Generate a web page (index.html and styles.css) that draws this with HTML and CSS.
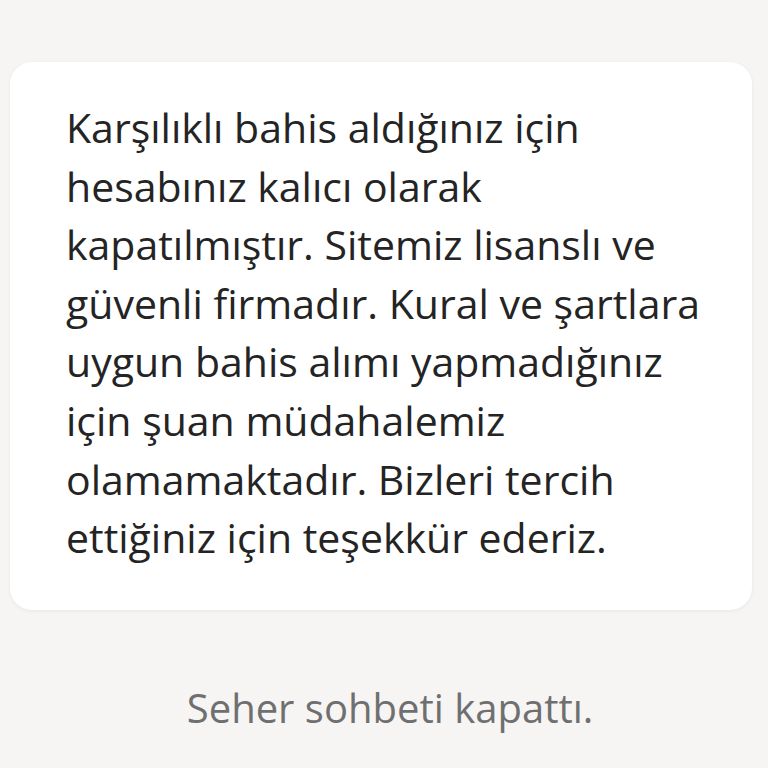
FILE: index.html
```html
<!DOCTYPE html>
<html lang="tr">
<head>
    <meta charset="UTF-8">
    <meta name="viewport" content="width=device-width, initial-scale=1.0">
    <title>Sohbet</title>
    <link rel="stylesheet" href="styles.css">
</head>
<body>
    <div class="chat">
        <!-- Agent message bubble -->
        <div class="message">
            <p>Karşılıklı bahis aldığınız için<br>
            hesabınız kalıcı olarak<br>
            kapatılmıştır. Sitemiz lisanslı ve<br>
            güvenli firmadır. Kural ve şartlara<br>
            uygun bahis alımı yapmadığınız<br>
            için şuan müdahalemiz<br>
            olamamaktadır. Bizleri tercih<br>
            ettiğiniz için teşekkür ederiz.</p>
        </div>

        <!-- System notice -->
        <div class="notice">Seher sohbeti kapattı.</div>
    </div>
</body>
</html>
```

FILE: styles.css
```css
/* General styling */
body {
    margin: 0;
    background-color: #f6f5f4;
    font-family: "Open Sans", "Noto Sans", Arial, sans-serif;
    color: #242424;
}

.chat {
    padding: 62px 16px 0 10px;
}

.message {
    background-color: #fff;
    border-radius: 22px;
    box-shadow: 0 1px 4px rgba(0, 0, 0, 0.06);
    padding: 36px 30px 43px 56px;
}

.message p {
    margin: 0;
    font-size: 41px;
    line-height: 58.6px;
    white-space: nowrap;
}

.notice {
    margin-top: 70px;
    text-align: center;
    font-size: 40px;
    color: #6f6f6f;
    padding-left: 18px;
}
```
